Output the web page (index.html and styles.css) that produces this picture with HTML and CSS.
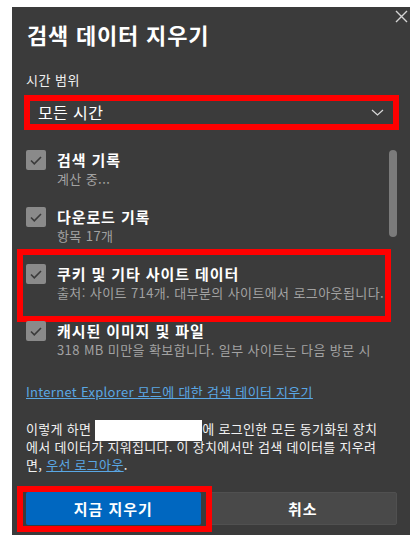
FILE: index.html
```html
<!DOCTYPE html>
<html lang="ko">
<head>
    <meta charset="UTF-8">
    <meta name="viewport" content="width=device-width, initial-scale=1.0">
    <title>검색 데이터 지우기</title>
    <link rel="stylesheet" href="styles.css">
</head>
<body>

<div class="panel">
    <button class="close" aria-label="닫기">
        <svg width="13" height="13" viewBox="0 0 13 13"><path d="M1 1L12 12M12 1L1 12" stroke="#d4d4d4" stroke-width="1.4" fill="none"/></svg>
    </button>

    <h1 class="title">검색 데이터 지우기</h1>

    <div class="label">시간 범위</div>
    <div class="select">
        <span>모든 시간</span>
        <svg width="13" height="7" viewBox="0 0 13 7"><path d="M1 1l5.5 5L12 1" stroke="#d8d8d8" stroke-width="1.2" fill="none"/></svg>
    </div>

    <div class="list">
        <div class="item">
            <span class="check"><svg width="20" height="20" viewBox="0 0 20 20"><path d="M5 10.5l3.3 3.3L15 7" stroke="#3a3a3a" stroke-width="1.6" fill="none"/></svg></span>
            <div class="item-text">
                <div class="item-title">검색 기록</div>
                <div class="item-sub">계산 중...</div>
            </div>
        </div>
        <div class="item">
            <span class="check"><svg width="20" height="20" viewBox="0 0 20 20"><path d="M5 10.5l3.3 3.3L15 7" stroke="#3a3a3a" stroke-width="1.6" fill="none"/></svg></span>
            <div class="item-text">
                <div class="item-title">다운로드 기록</div>
                <div class="item-sub">항목 17개</div>
            </div>
        </div>
        <div class="item marked">
            <span class="check"><svg width="20" height="20" viewBox="0 0 20 20"><path d="M5 10.5l3.3 3.3L15 7" stroke="#3a3a3a" stroke-width="1.6" fill="none"/></svg></span>
            <div class="item-text">
                <div class="item-title">쿠키 및 기타 사이트 데이터</div>
                <div class="item-sub">출처: 사이트 714개. 대부분의 사이트에서 로그아웃됩니다.</div>
            </div>
        </div>
        <div class="item">
            <span class="check"><svg width="20" height="20" viewBox="0 0 20 20"><path d="M5 10.5l3.3 3.3L15 7" stroke="#3a3a3a" stroke-width="1.6" fill="none"/></svg></span>
            <div class="item-text">
                <div class="item-title">캐시된 이미지 및 파일</div>
                <div class="item-sub">318 MB 미만을 확보합니다. 일부 사이트는 다음 방문 시</div>
            </div>
        </div>
        <div class="scrollbar"></div>
    </div>

    <a class="link" href="#">Internet Explorer 모드에 대한 검색 데이터 지우기</a>

    <p class="note">이렇게 하면 <span class="redact"></span>에 로그인한 모든 동기화된 장치<br>에서 데이터가 지워집니다. 이 장치에서만 검색 데이터를 지우려<br>면, <a href="#">우선 로그아웃</a>.</p>

    <div class="actions">
        <div class="marked-btn">
            <button class="primary">지금 지우기</button>
        </div>
        <button class="secondary">취소</button>
    </div>
</div>

</body>
</html>
```

FILE: styles.css
```css
body {
    margin: 0;
    background: #ffffff;
    font-family: "Noto Sans CJK KR", "Noto Sans", sans-serif;
}
.panel {
    position: relative;
    box-sizing: border-box;
    width: 398px;
    height: 528px;
    margin: 7px 0 0 12px;
    padding: 15px 13px 0 14px;
    background: #3b3b3b;
    color: #ffffff;
}
.close {
    position: absolute;
    top: 3px;
    right: 2px;
    width: 13px;
    height: 13px;
    padding: 0;
    border: none;
    background: none;
    line-height: 0;
}
.title {
    margin: 0 0 0 1px;
    font-size: 22px;
    line-height: 24px;
    font-weight: 700;
    letter-spacing: 0.8px;
}
.label {
    margin-top: 25px;
    font-size: 13px;
    line-height: 18px;
    letter-spacing: 0.5px;
    color: #f0f0f0;
}
.select {
    display: flex;
    align-items: center;
    justify-content: space-between;
    box-sizing: border-box;
    height: 35px;
    margin: 6px -2px 0;
    padding: 0 9px 0 8px;
    border: 6px solid #ff0000;
    font-size: 16px;
    line-height: 23px;
    letter-spacing: 0.4px;
}
.list {
    position: relative;
    padding: 20px 11px 0 0;
}
.item {
    position: relative;
    display: flex;
    gap: 11px;
    height: 57px;
}
.marked::after {
    content: "";
    position: absolute;
    top: -15px;
    bottom: -1px;
    left: -9px;
    right: -5px;
    border: 6px solid #ff0000;
}
.check {
    flex: none;
    width: 20px;
    height: 20px;
    border-radius: 2px;
    background: #8a8a8a;
    line-height: 0;
}
.item-text {
    flex: 1;
    min-width: 0;
}
.item-title {
    font-size: 15px;
    line-height: 20px;
    font-weight: 700;
    letter-spacing: 0.9px;
}
.item-sub {
    font-size: 13px;
    line-height: 18px;
    letter-spacing: 0.4px;
    color: #a2a2a2;
    white-space: nowrap;
    overflow: hidden;
}
.scrollbar {
    position: absolute;
    top: 20px;
    right: 0;
    width: 8px;
    height: 87px;
    border-radius: 4px;
    background: #7b7b7b;
}
.link {
    display: inline-block;
    margin-top: 2px;
    font-size: 13px;
    line-height: 18px;
    letter-spacing: 0.3px;
    color: #5aa7e4;
}
.note {
    margin: 18px 0 0;
    font-size: 13px;
    line-height: 18px;
    letter-spacing: 0.3px;
    color: #f2f2f2;
}
.note a {
    color: #5aa7e4;
}
.redact {
    display: inline-block;
    width: 107px;
    height: 21px;
    margin: -3px 0;
    background: #ffffff;
    vertical-align: middle;
}
.actions {
    display: flex;
    gap: 8px;
    margin-top: 18px;
}
.marked-btn {
    position: relative;
    flex: 1;
    display: flex;
}
.marked-btn::after {
    content: "";
    position: absolute;
    top: -6px;
    bottom: -7px;
    left: -9px;
    right: -11px;
    border: 6px solid #ff0000;
}
button {
    font-family: inherit;
    cursor: pointer;
}
.primary,
.secondary {
    flex: 1;
    height: 33px;
    border: none;
    border-radius: 2px;
    font-size: 15px;
    font-weight: 700;
    letter-spacing: 1px;
    color: #ffffff;
}
.primary {
    background: #0067c0;
}
.secondary {
    border: 1px solid #505050;
    background: #494949;
}
```
